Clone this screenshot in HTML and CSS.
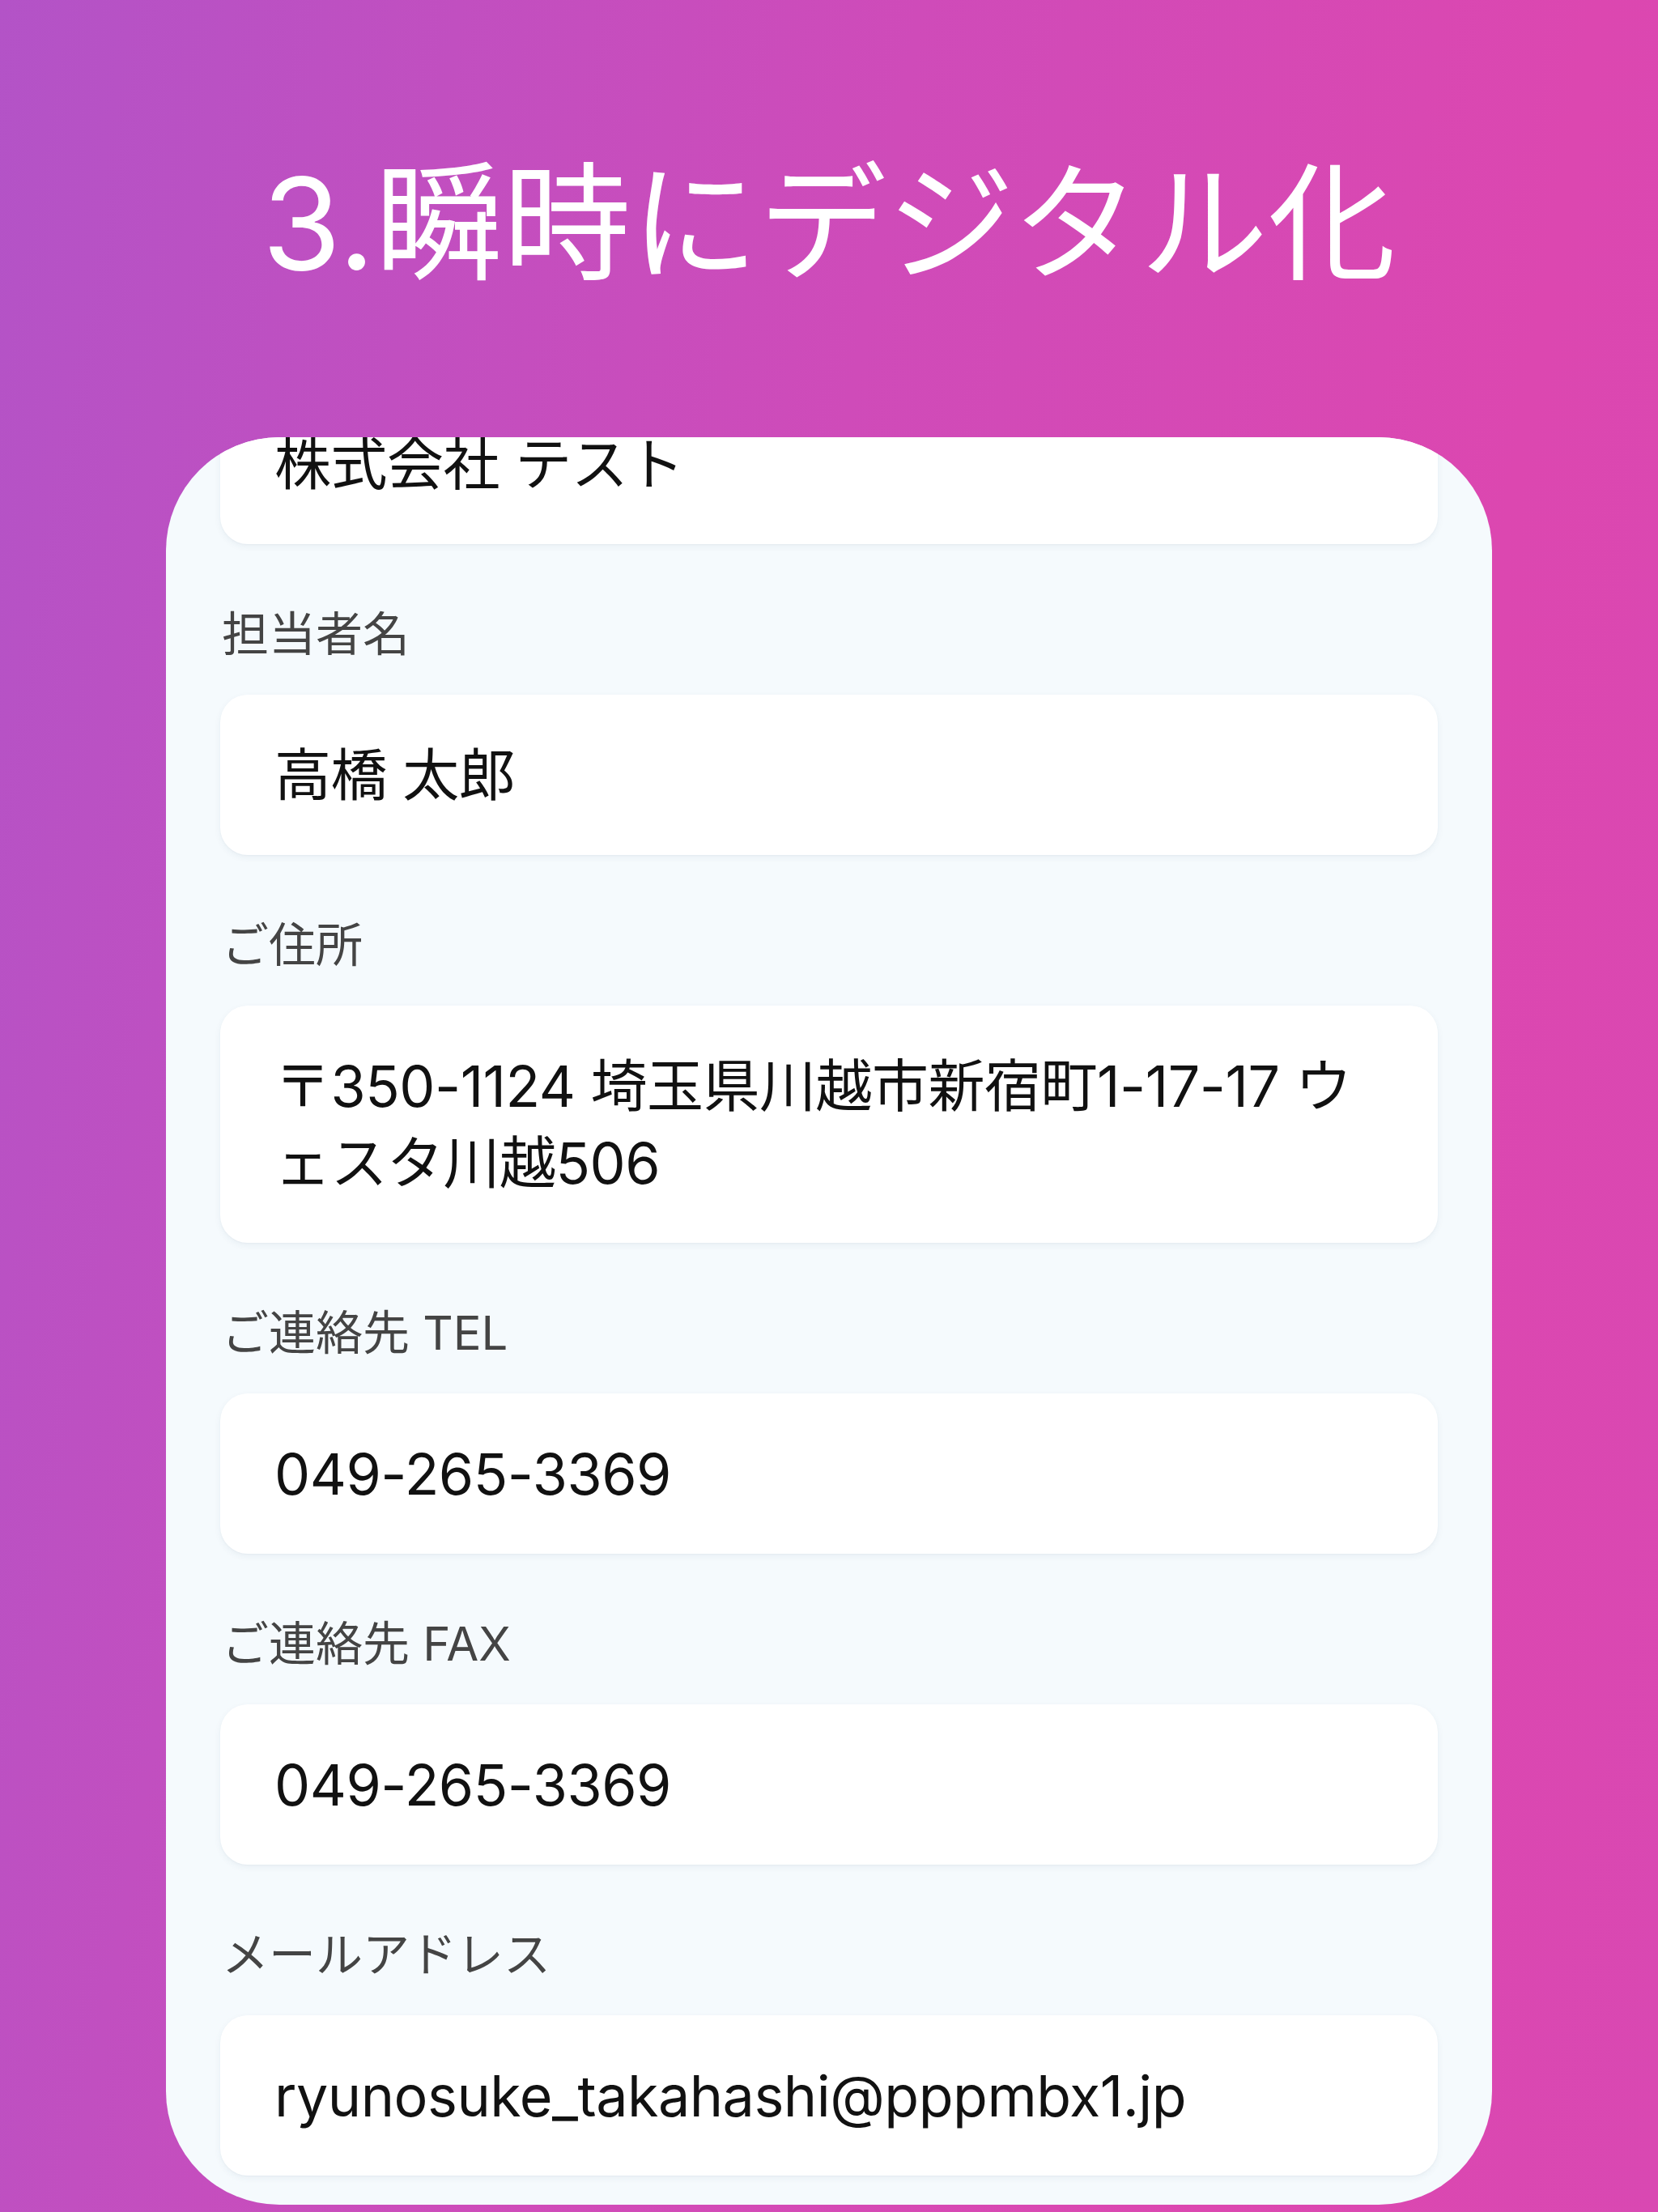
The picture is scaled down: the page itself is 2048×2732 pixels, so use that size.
FILE: index.html
```html
<!DOCTYPE html>
<html lang="ja">
<head>
    <meta charset="UTF-8">
    <title>瞬時にデジタル化</title>
    <link rel="stylesheet" href="styles.css">
</head>
<body>
    <h1 class="title">3.瞬時にデジタル化</h1>

    <div class="card">
        <div class="form">
            <div class="input">株式会社 テスト</div>

            <div class="field">
                <div class="label">担当者名</div>
                <div class="input">高橋 太郎</div>
            </div>

            <div class="field">
                <div class="label">ご住所</div>
                <div class="input address">〒350-1124 埼玉県川越市新宿町1-17-17 ウェスタ川越506</div>
            </div>

            <div class="field">
                <div class="label">ご連絡先 TEL</div>
                <div class="input">049-265-3369</div>
            </div>

            <div class="field">
                <div class="label">ご連絡先 FAX</div>
                <div class="input">049-265-3369</div>
            </div>

            <div class="field">
                <div class="label">メールアドレス</div>
                <div class="input">ryunosuke_takahashi@pppmbx1.jp</div>
            </div>
        </div>
    </div>
</body>
</html>
```

FILE: styles.css
```css
body {
    margin: 0;
    height: 2732px;
    box-sizing: border-box;
    padding-top: 176px;
    overflow: hidden;
    font-family: Inter, "Noto Sans CJK JP", sans-serif;
    background: linear-gradient(100deg, #b353c7 0%, #cf4bb9 45%, #dc47b0 78%, #d948b2 100%);
}

.title {
    margin: 0;
    font-size: 158px;
    line-height: 200px;
    font-weight: 400;
    color: #ffffff;
    text-align: center;
}

.card {
    margin: 164px 0 0 205px;
    width: 1638px;
    height: 2183px;
    box-sizing: border-box;
    padding: 0 67px;
    background-color: #f5fafd;
    border-radius: 140px;
    overflow: hidden;
}

/* list is scrolled a little, first field is cut off */
.form {
    margin-top: -66px;
}

.field {
    padding-top: 71px;
}

.label {
    font-size: 58px;
    line-height: 80px;
    color: #444444;
    padding-left: 2px;
    margin-bottom: 35px;
}

.input {
    background-color: #ffffff;
    border-radius: 34px;
    padding: 52px 40px 51px 67px;
    font-size: 70px;
    line-height: 95px;
    letter-spacing: -0.5px;
    color: #111111;
    box-shadow: 0 3px 8px rgba(40, 70, 100, 0.06), 0 1px 2px rgba(40, 70, 100, 0.04);
}

.address {
    line-break: loose;
}
```
